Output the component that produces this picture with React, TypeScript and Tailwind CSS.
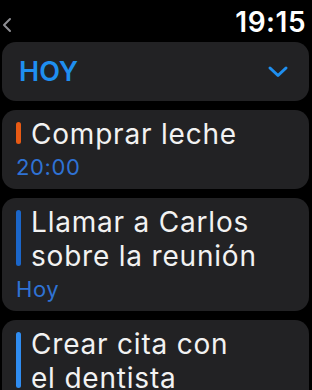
import React from "react";

type Task = {
  title: string;
  sub?: string;
  bar: string;
};

const tasks: Task[] = [
  { title: "Comprar leche", sub: "20:00", bar: "bg-[#e85a14]" },
  { title: "Llamar a Carlos\nsobre la reunión", sub: "Hoy", bar: "bg-[#1b66c9]" },
  { title: "Crear cita con\nel dentista", bar: "bg-[#2f8cf0]" },
];

function TaskCard({ task }: { task: Task }) {
  return (
    <div className="rounded-[14px] bg-[#222224] pl-[14px] pr-[10px] pt-[7px] pb-[8px]">
      <div className="flex">
        {/* barra de color */}
        <div className={`w-[5px] shrink-0 rounded-full mt-[5px] mb-[7px] ${task.bar}`} />
        <div className="ml-[10px] whitespace-pre-line text-[28px] leading-[34px] tracking-[0.8px] text-[#f2f2f2]">
          {task.title}
        </div>
      </div>
      {task.sub && (
        <div className="mt-[3px] text-[22px] leading-[27px] tracking-[0.6px] text-[#2f72d4]">{task.sub}</div>
      )}
    </div>
  );
}

export default function App() {
  return (
    <div
      className="w-[312px] h-[390px] overflow-hidden bg-black"
      style={{ fontFamily: "Inter, 'Noto Sans', sans-serif" }}
    >
      {/* barra de estado */}
      <div className="flex items-start justify-between pl-[2px] pr-[6px] pt-[5px] mb-[3px]">
        <svg width="10" height="16" viewBox="0 0 10 16" className="mt-[12px]">
          <path d="M8 2 L2 8 L8 14" fill="none" stroke="#8e8e93" strokeWidth="2" strokeLinecap="round" strokeLinejoin="round" />
        </svg>
        <div className="text-[28px] leading-[34px] font-semibold tracking-[0.5px] text-white">19:15</div>
      </div>

      <div className="ml-[2px] mr-[3px] flex flex-col gap-[9px]">
        {/* encabezado */}
        <div className="flex h-[59px] items-center justify-between rounded-[14px] bg-[#222224] pl-[17px] pr-[20px]">
          <span className="text-[27px] font-semibold leading-none text-[#1f8ff0]">HOY</span>
          <svg width="22" height="14" viewBox="0 0 22 14">
            <path d="M3 3 L11 10.5 L19 3" fill="none" stroke="#1f8ff0" strokeWidth="3" strokeLinecap="round" strokeLinejoin="round" />
          </svg>
        </div>

        {tasks.map((t) => (
          <TaskCard key={t.title} task={t} />
        ))}
      </div>
    </div>
  );
}
